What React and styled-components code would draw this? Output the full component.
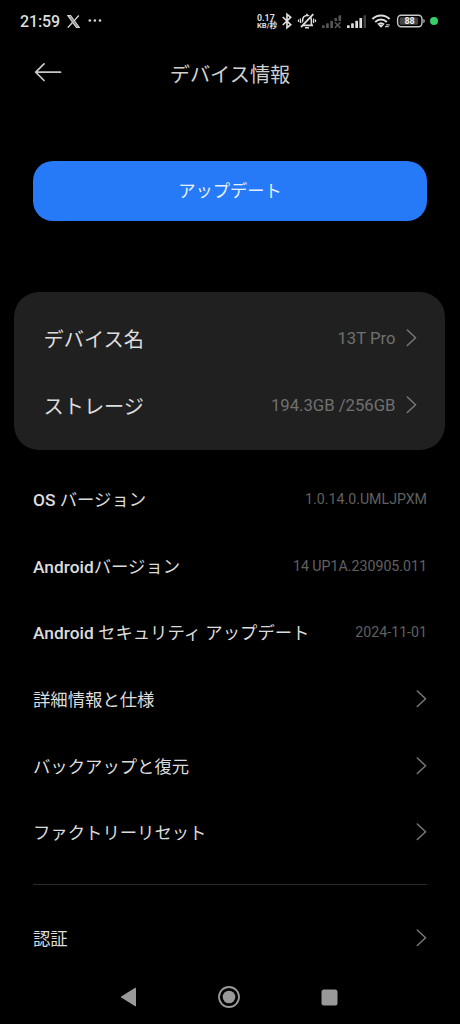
import React from 'react';
import styled, { createGlobalStyle } from 'styled-components';

const GlobalStyle = createGlobalStyle`
  * {
    box-sizing: border-box;
  }
  body {
    margin: 0;
    background: #000;
    color: #dcdcdc;
    font-family: Roboto, "Noto Sans CJK JP", sans-serif;
  }
  svg {
    display: block;
    flex: none;
  }
`;

const Screen = styled.div`
  display: flex;
  flex-direction: column;
  width: 460px;
  height: 1024px;
  overflow: hidden;
  background: #000;
`;

const StatusBar = styled.div`
  display: flex;
  flex: none;
  align-items: center;
  justify-content: space-between;
  height: 42px;
  padding: 0 22px 0 20px;
`;

const StatusGroup = styled.div`
  display: flex;
  align-items: center;
  gap: ${props => props.$gap}px;
`;

const Clock = styled.span`
  width: 39px;
  font-size: 16px;
  font-weight: 500;
  line-height: 20px;
  letter-spacing: -0.1px;
  padding-top: 2px;
`;

const NetSpeed = styled.div`
  width: 20px;
  padding-top: 2px;
  font-weight: 700;
  white-space: nowrap;
`;

const SpeedLine = styled.div`
  height: 8px;
  line-height: 8px;
  font-size: ${props => props.$size}px;
`;

const Header = styled.header`
  display: grid;
  flex: none;
  grid-template-columns: 60px 1fr 60px;
  align-items: center;
  height: 62px;
  padding: 0 33.5px;
`;

const Title = styled.h1`
  margin: 0;
  padding-top: 3px;
  font-size: 20.2px;
  font-weight: 400;
  line-height: 30px;
  text-align: center;
  color: #d0d0d0;
`;

const Content = styled.main`
  display: flex;
  flex: 1 1 0;
  flex-direction: column;
  min-height: 0;
  padding-top: 57px;
`;

const UpdateButton = styled.button`
  flex: none;
  height: 60px;
  margin: 0 33px;
  padding: 0 0 4px;
  border: 0;
  border-radius: 20px;
  background: #277af7;
  color: #e6f0ff;
  font-family: inherit;
  font-size: 17.3px;
`;

const Card = styled.section`
  flex: none;
  height: 158px;
  margin: 71px 15px 0 14px;
  padding: 13px 28.5px 0 29.5px;
  border-radius: 25px;
  background: #202020;
`;

const List = styled.section`
  flex: none;
  padding: 15.5px 33px 0;
`;

const Row = styled.div`
  display: flex;
  align-items: center;
  justify-content: space-between;
  height: 66.7px;
`;

const Label = styled.span`
  padding-top: ${props => (props.$large ? 3 : 2)}px;
  font-size: ${props => (props.$large ? 20.2 : 17.35)}px;
  line-height: 30px;
  white-space: nowrap;
`;

const Latin = styled.span`
  font-weight: 500;
`;

const Value = styled.span`
  display: flex;
  align-items: center;
  gap: 10px;
  font-size: ${props => (props.$large ? 16.7 : 14.2)}px;
  line-height: 20px;
  color: ${props => (props.$large ? '#707070' : '#606060')};
  white-space: nowrap;
`;

const ValueText = styled.span`
  padding-top: ${props => props.$top || 0}px;
`;

const Divider = styled.hr`
  height: 1px;
  margin: 18px 0 20px;
  border: 0;
  background: #292929;
`;

const NavBar = styled.nav`
  display: flex;
  flex: none;
  align-items: center;
  justify-content: space-between;
  height: 54px;
  padding: 0 122px 0 120px;
`;

function Chevron() {
  return (
    <svg width="11" height="18" viewBox="0 0 11 18" fill="none" stroke="#777" strokeWidth="1.5" strokeLinecap="round" strokeLinejoin="round">
      <path d="M1.3 1 9.6 8.7l-8.3 7.8" />
    </svg>
  );
}

function XLogo() {
  return (
    <svg width="13" height="13" viewBox="0 0 13 13" fill="none" stroke="#d4d4d4">
      <path d="M.9.7h2.7l8.5 11.6H9.4z" strokeWidth="1.2" />
      <path d="M2.4 1 10.5 12" strokeWidth=".9" />
      <path d="M11.8.5 7.3 5.6M5.5 7.5.8 12.6" strokeWidth="1.4" />
    </svg>
  );
}

function Dots() {
  return (
    <svg width="14" height="4" viewBox="0 0 14 4" fill="#d4d4d4">
      <circle cx="1.8" cy="1.5" r="1.3" />
      <circle cx="6.9" cy="1.5" r="1.3" />
      <circle cx="12" cy="1.5" r="1.3" />
    </svg>
  );
}

function Bluetooth() {
  return (
    <svg width="10" height="18" viewBox="0 0 10 18" fill="none" stroke="#dedede" strokeWidth="1.7">
      <path d="m.8 5 7.9 7.6L5 15.7V2.3l3.7 3.1L.8 13" />
    </svg>
  );
}

function BellOff() {
  return (
    <svg width="20" height="18" viewBox="0 0 20 18" fill="none" stroke="#dedede" strokeWidth="1.6">
      <path d="M5.6 13V8.4C5.6 5.4 7.4 3.5 10 3.5s4.4 1.9 4.4 4.9V13M4 13.4h12M8 15.7h4M10 1.8v1.7" />
      <path d="M3.4 6.5v4.6M1.5 7.6v2.4M16.6 6.5v4.6M18.5 7.6v2.4" strokeWidth="1.2" />
      <path d="M15 1.8 2.9 14.3" stroke="#000" strokeWidth="1.8" />
      <path d="M16.3 2.2 4 15.2" strokeWidth="1.8" />
    </svg>
  );
}

function Signal({ off }) {
  const color = off ? '#555' : '#dedede';
  return (
    <svg width="19.5" height="15" viewBox="0 0 19.5 15" fill={color}>
      <rect x="0" y="11.2" width="2.7" height="2.8" rx=".6" />
      <rect x="4.1" y="9.3" width="2.7" height="4.7" rx=".6" />
      <rect x="8.3" y="6.8" width="2.7" height="7.2" rx=".6" />
      {off ? (
        <g>
          <rect x="12.4" y="4" width="2.6" height="3" rx=".6" />
          <rect x="16.5" y="1.2" width="2.6" height="5.8" rx=".6" />
          <path d="m12.9 8.3 5.6 5.6m0-5.6-5.6 5.6" stroke={color} strokeWidth="1.6" />
        </g>
      ) : (
        <g>
          <rect x="12.4" y="4" width="2.7" height="10" rx=".6" />
          <rect x="16.6" y="1.2" width="2.5" height="12.8" rx=".6" fill="#444" />
        </g>
      )}
    </svg>
  );
}

function Wifi() {
  return (
    <svg width="20" height="16" viewBox="0 0 20 16" fill="none" stroke="#dedede" strokeWidth="2">
      <path d="M1.4 6c4.9-4.8 12.3-4.8 17.2 0M4.2 8.9c3.4-3.2 8.2-3.2 11.6 0M6.9 11.6c1.9-1.7 4.3-1.7 6.2 0" />
      <path d="m7.5 12.2 2.5 2.6 2.5-2.6c-1.2-1-3.8-1-5 0z" fill="#dedede" stroke="none" />
      <path d="M13.8 10.8h5.7v4.6h-5.7z" fill="#000" stroke="none" />
      <path d="M15 11.9h3.8M14 13.7h3.8" strokeWidth="1.2" stroke="#bbb" />
    </svg>
  );
}

function Battery() {
  return (
    <svg width="29" height="14" viewBox="0 0 29 14">
      <rect x="1.6" y="1.3" width="24.4" height="11.4" rx="3.6" fill="none" stroke="#c8c8c8" strokeWidth="1.4" />
      <rect x="3.6" y="3.2" width="18.4" height="7.6" rx="1.6" fill="#444" />
      <path d="M27.4 5v4c.9-.3 1.3-1 1.3-2s-.4-1.7-1.3-2z" fill="#c8c8c8" />
      <text x="13.6" y="10.2" fill="#eee" fontSize="9" fontWeight="700" fontFamily="Roboto, sans-serif" textAnchor="middle">88</text>
    </svg>
  );
}

const StatusDot = styled.i`
  width: 8px;
  height: 8px;
  border-radius: 50%;
  background: #35cf68;
`;

const cardRows = [
  { label: 'デバイス名', value: '13T Pro' },
  { label: 'ストレージ', value: '194.3GB /256GB' }
];

const rows = [
  { latin: 'OS', label: ' バージョン', value: '1.0.14.0.UMLJPXM' },
  { latin: 'Android', label: 'バージョン', value: '14 UP1A.230905.011' },
  { latin: 'Android', label: ' セキュリティ アップデート', value: '2024-11-01' },
  { label: '詳細情報と仕様' },
  { label: 'バックアップと復元' },
  { label: 'ファクトリーリセット' }
];

function App() {
  return (
    <Screen>
      <GlobalStyle />
      <StatusBar>
        <StatusGroup $gap={8}>
          <Clock>21:59</Clock>
          <XLogo />
          <Dots />
        </StatusGroup>
        <StatusGroup $gap={5}>
          <NetSpeed>
            <SpeedLine $size={8.8}>0.17</SpeedLine>
            <SpeedLine $size={7.6}>KB/秒</SpeedLine>
          </NetSpeed>
          <Bluetooth />
          <BellOff />
          <Signal off />
          <Signal />
          <Wifi />
          <Battery />
          <StatusDot />
        </StatusGroup>
      </StatusBar>

      <Header>
        <svg width="28" height="20" viewBox="0 0 28 20" fill="none" stroke="#c8c8c8" strokeWidth="1.7" strokeLinecap="round" strokeLinejoin="round">
          <path d="M26.5 9.2H1.7M10 .9 1.7 9.2l8.3 8.3" />
        </svg>
        <Title>デバイス情報</Title>
      </Header>

      <Content>
        <UpdateButton>アップデート</UpdateButton>

        <Card>
          {cardRows.map(row => (
            <Row key={row.label}>
              <Label $large>{row.label}</Label>
              <Value $large>
                <ValueText $top={1}>{row.value}</ValueText>
                <Chevron />
              </Value>
            </Row>
          ))}
        </Card>

        <List>
          {rows.map(row => (
            <Row key={row.label}>
              <Label>
                {row.latin && <Latin>{row.latin}</Latin>}
                {row.label}
              </Label>
              <Value>{row.value ? <ValueText>{row.value}</ValueText> : <Chevron />}</Value>
            </Row>
          ))}
          <Divider />
          <Row>
            <Label>認証</Label>
            <Value><Chevron /></Value>
          </Row>
        </List>
      </Content>

      <NavBar>
        <svg width="17" height="20" viewBox="0 0 17 20" fill="#999">
          <path d="M16 1v18q0 .6-.8.2L1.2 10.6q-.8-.6 0-1.2L15.2.8q.8-.4.8.2z" />
        </svg>
        <svg width="24" height="24" viewBox="0 0 24 24">
          <circle cx="12" cy="12" r="10" fill="none" stroke="#999" strokeWidth="1.8" />
          <circle cx="12" cy="12" r="6.3" fill="#999" />
        </svg>
        <svg width="17" height="17" viewBox="0 0 17 17">
          <rect x=".5" y=".5" width="16" height="16" rx="2.5" fill="#999" />
        </svg>
      </NavBar>
    </Screen>
  );
}

export default App;
